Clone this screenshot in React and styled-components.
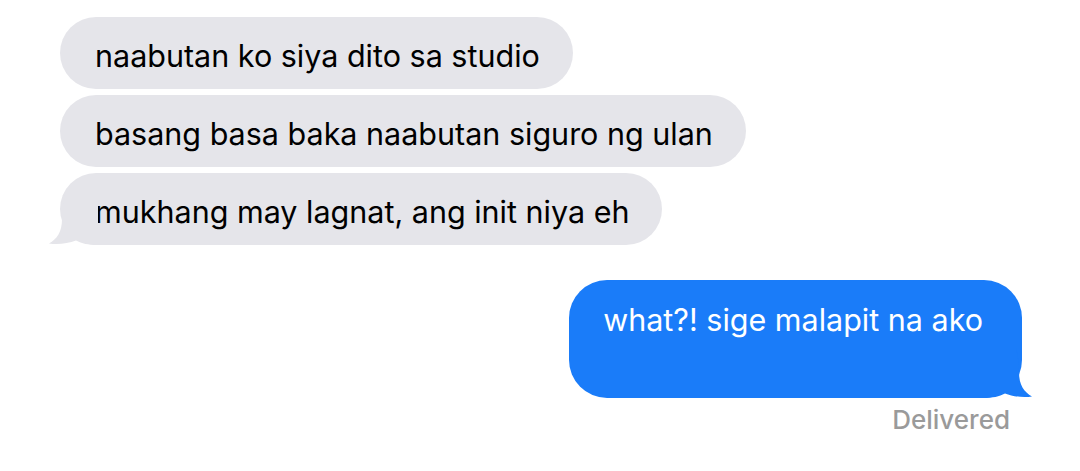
import React from "react";
import styled, { createGlobalStyle } from "styled-components";

const GlobalStyle = createGlobalStyle`
  *, *::before, *::after { box-sizing: border-box; margin: 0; padding: 0; }
  body {
    background: #ffffff;
    font-family: Inter, "Noto Sans", "Liberation Sans", sans-serif;
    -webkit-font-smoothing: antialiased;
  }
`;

const received = [
  "naabutan ko siya dito sa studio",
  "basang basa baka naabutan siguro ng ulan",
  "mukhang may lagnat, ang init niya eh",
];

function Tail({ side, color }) {
  return (
    <TailSvg $side={side} viewBox="0 0 50 50" width="50" height="50">
      <path
        d="M17,0 C15,8 14,16 14,24 C14,37 9,44 1,48.5 C10,49.8 20,48.6 28,45.5 C34,48.5 40,50 50,50 L50,0 Z"
        fill={color}
      />
    </TailSvg>
  );
}

export default function App() {
  return (
    <>
      <GlobalStyle />
      <Thread>
        <Group>
          {received.map((text, i) => (
            <Bubble key={i}>
              {text}
              {i === received.length - 1 && <Tail side="left" color="#e5e5ea" />}
            </Bubble>
          ))}
        </Group>
        <Sent>
          what?! sige malapit na ako
          <Tail side="right" color="#1a7cf9" />
        </Sent>
        <Status>Delivered</Status>
      </Thread>
    </>
  );
}

const Thread = styled.main`
  width: 1080px;
  height: 471px;
  display: flex;
  flex-direction: column;
  padding: 17px 58px 0 60px;
`;

const Group = styled.div`
  display: flex;
  flex-direction: column;
  align-items: flex-start;
  gap: 6px;
`;

const Bubble = styled.div`
  position: relative;
  height: 72px;
  padding: 21px 33px 0 35px;
  border-radius: 36px;
  background: #e5e5ea;
  color: #000;
  font-size: 30.5px;
  line-height: 36px;
  white-space: nowrap;
`;

const Sent = styled.div`
  position: relative;
  align-self: flex-end;
  margin-top: 35px;
  height: 118px;
  padding: 22px 39px 0 34px;
  border-radius: 38px;
  background: #1a7cf9;
  color: #ffffff;
  font-size: 30.5px;
  line-height: 36px;
  white-space: nowrap;
`;

const TailSvg = styled.svg`
  position: absolute;
  bottom: 0;
  ${(p) =>
    p.$side === "left"
      ? "left: -12px;"
      : "right: -11px; transform: scaleX(-1);"}
`;

const Status = styled.div`
  align-self: flex-end;
  margin: 7px 12px 0 0;
  color: #9a9a9a;
  font-size: 26px;
  font-weight: 500;
  line-height: 30px;
`;
